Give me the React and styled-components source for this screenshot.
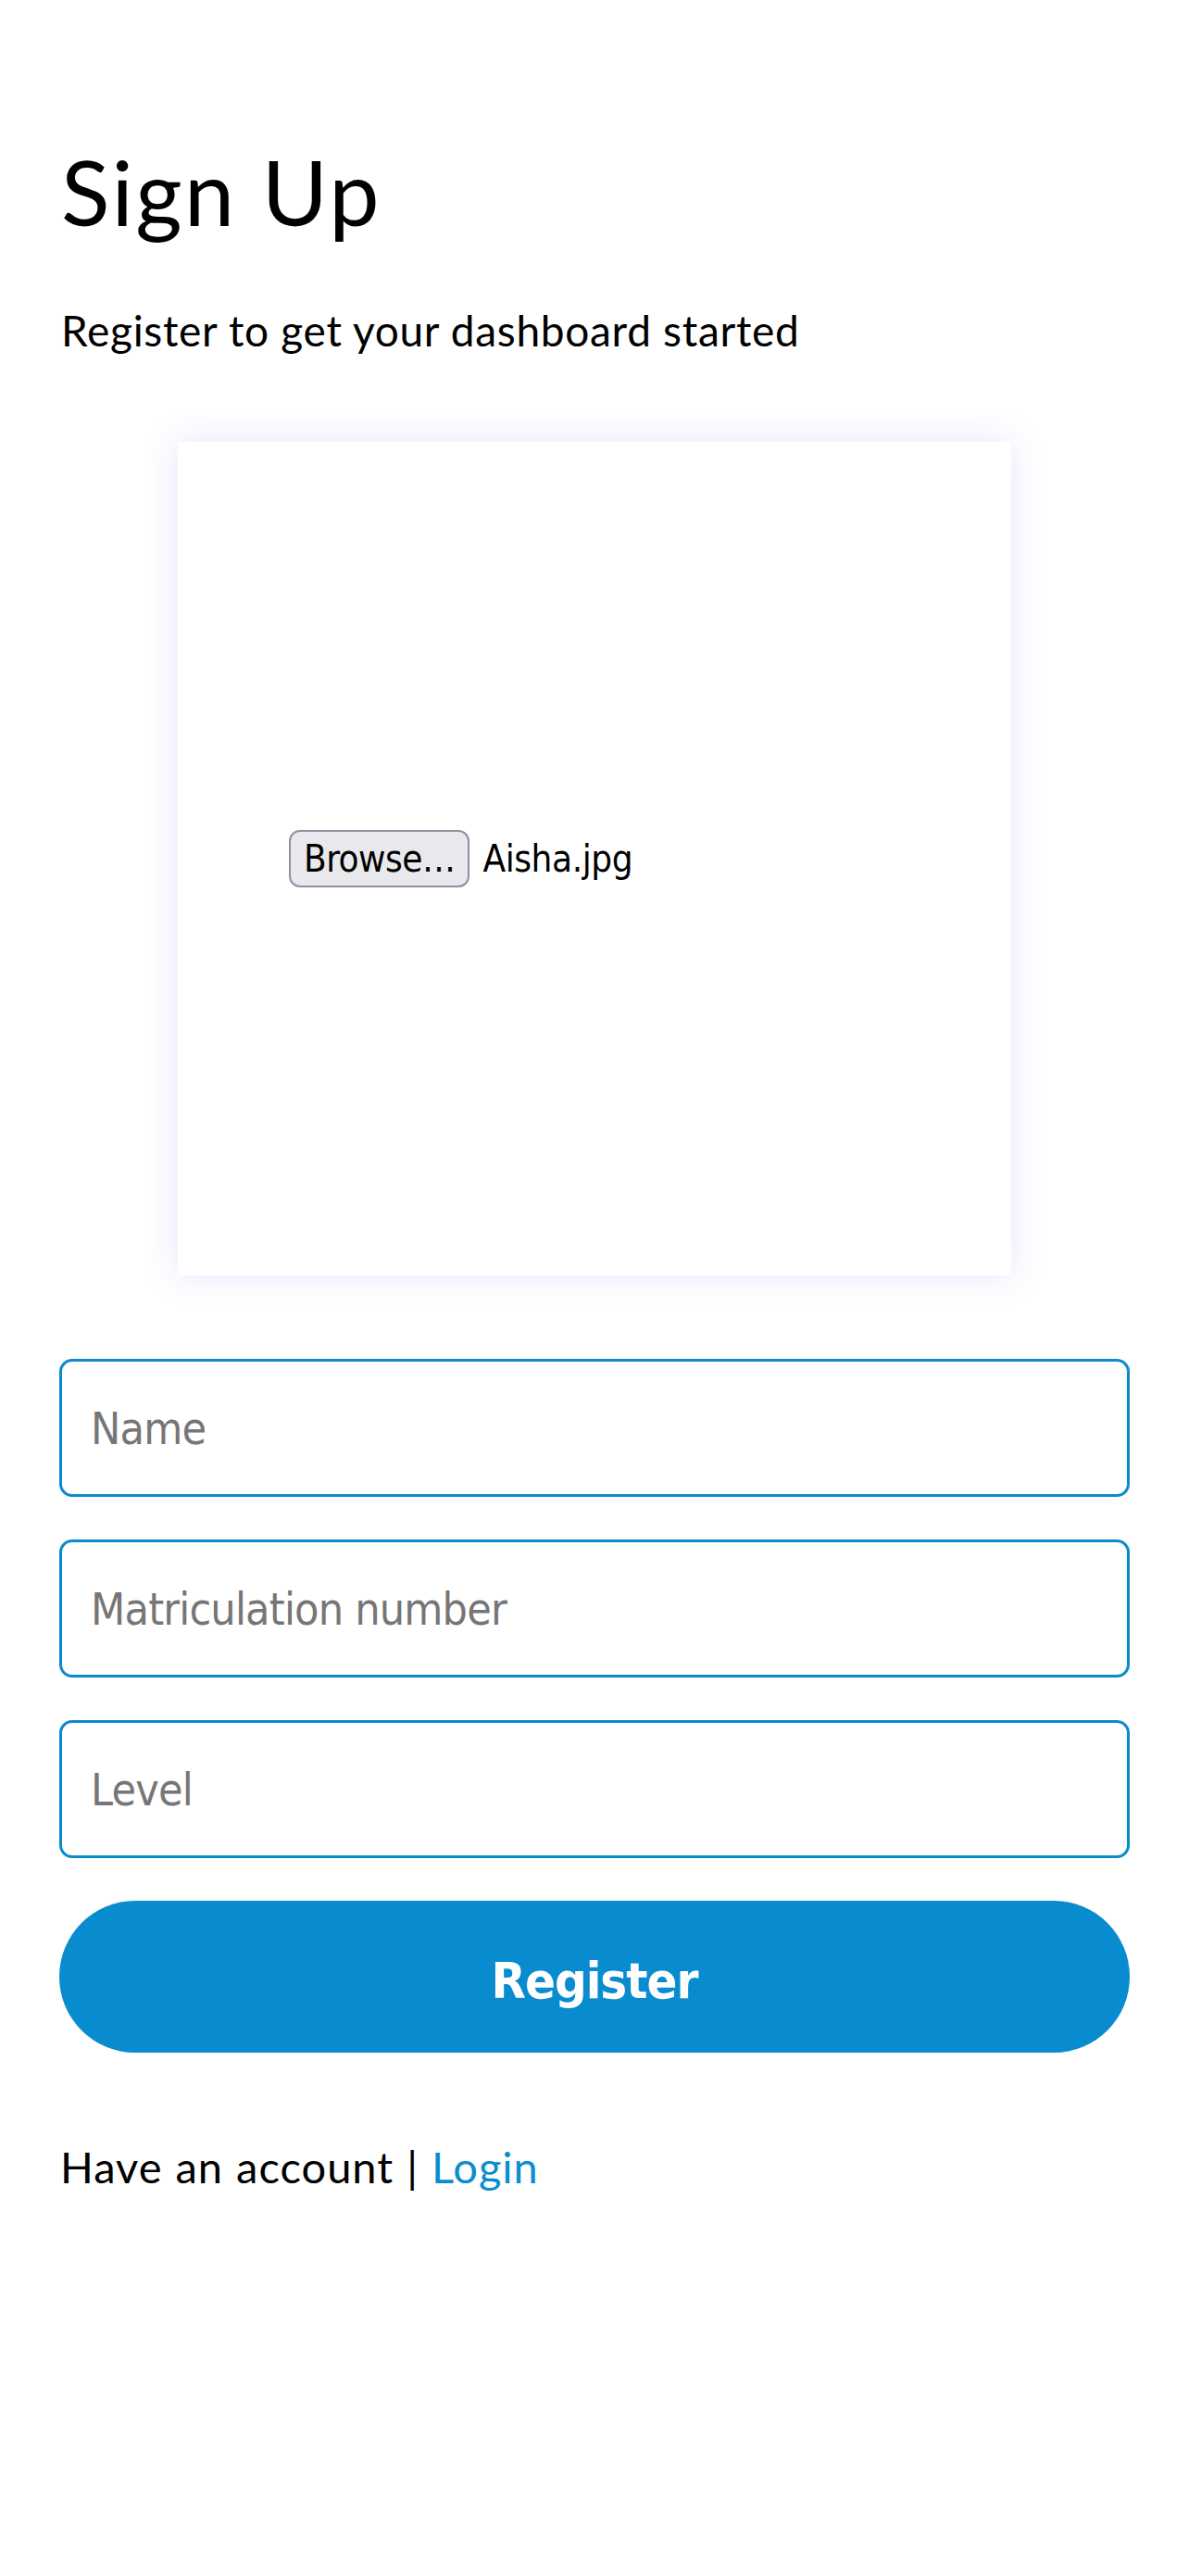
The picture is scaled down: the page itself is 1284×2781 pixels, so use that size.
import React from 'react';
import styled, { createGlobalStyle } from 'styled-components';

const GlobalStyle = createGlobalStyle`
  html, body {
    margin: 0;
    padding: 0;
    background: #ffffff;
  }
  body {
    font-family: Lato, "Liberation Sans", sans-serif;
    color: #000000;
  }
  *, *::before, *::after {
    box-sizing: border-box;
  }
`;

const Page = styled.main`
  width: 1284px;
  min-height: 2781px;
  padding: 149px 64px 0;
  display: flex;
  flex-direction: column;
`;

const Title = styled.h1`
  margin: 0;
  padding-left: 2px;
  font-family: Lato, "Liberation Sans", sans-serif;
  font-weight: 400;
  font-size: 97px;
  line-height: 116px;
  letter-spacing: 2.4px;
  color: #000;
`;

const Subtitle = styled.p`
  margin: 64px 0 0;
  padding-left: 2px;
  font-family: Lato, "Liberation Sans", sans-serif;
  font-weight: 400;
  font-size: 46px;
  line-height: 56px;
  letter-spacing: 0.7px;
  color: #000;
`;

const UploadCard = styled.div`
  align-self: center;
  margin-top: 92px;
  width: 900px;
  height: 900px;
  background: #ffffff;
  box-shadow: 0 0 34px rgba(100, 100, 255, 0.17);
  display: flex;
  align-items: center;
  justify-content: center;
`;

const FileField = styled.div`
  width: 660px;
  display: flex;
  align-items: center;
  gap: 14px;
  font-family: "DejaVu Sans Condensed", "DejaVu Sans", sans-serif;
  font-stretch: condensed;
  font-size: 40px;
  letter-spacing: -0.4px;
`;

const FileButton = styled.button`
  height: 62px;
  padding: 0 14px;
  border: 2px solid #8f8f9d;
  border-radius: 12px;
  background: #e9e9ed;
  color: #000;
  font: inherit;
  font-stretch: condensed;
  letter-spacing: -0.5px;
  line-height: 1;
`;

const FileName = styled.span`
  color: #000;
`;

const Form = styled.form`
  margin-top: 90px;
  display: flex;
  flex-direction: column;
  gap: 46px;
`;

const TextInput = styled.input`
  width: 100%;
  height: 149px;
  padding: 0 31px;
  border: 3px solid #0b8bcd;
  border-radius: 14px;
  background: #fff;
  font-family: "DejaVu Sans Condensed", "DejaVu Sans", sans-serif;
  font-stretch: condensed;
  font-size: 48px;
  letter-spacing: -0.8px;
  color: #000;
  outline: none;

  &::placeholder {
    color: #767676;
    opacity: 1;
  }
`;

const SubmitButton = styled.button`
  width: 100%;
  height: 164px;
  border: none;
  border-radius: 82px;
  background: #098ccf;
  color: #ffffff;
  font-family: "DejaVu Sans Condensed", "DejaVu Sans", sans-serif;
  font-stretch: condensed;
  font-weight: 700;
  font-size: 54px;
  letter-spacing: -1px;
  display: flex;
  align-items: center;
  justify-content: center;
  padding-top: 10px;
`;

const Footer = styled.p`
  margin: 95px 0 0;
  padding-left: 1px;
  font-family: Lato, "Liberation Sans", sans-serif;
  font-size: 47px;
  line-height: 56px;
  letter-spacing: 1px;
  word-spacing: 1px;
  color: #000;
`;

const LoginLink = styled.a`
  color: #0b8dcf;
  text-decoration: none;
`;

export default function App() {
  return (
    <>
      <GlobalStyle />
      <Page>
        <Title>Sign Up</Title>
        <Subtitle>Register to get your dashboard started</Subtitle>
        <UploadCard>
          <FileField>
            <FileButton type="button">Browse…</FileButton>
            <FileName>Aisha.jpg</FileName>
          </FileField>
        </UploadCard>
        <Form onSubmit={(e) => e.preventDefault()}>
          <TextInput type="text" placeholder="Name" />
          <TextInput type="text" placeholder="Matriculation number" />
          <TextInput type="text" placeholder="Level" />
          <SubmitButton type="submit">Register</SubmitButton>
        </Form>
        <Footer>
          Have an account | <LoginLink href="#">Login</LoginLink>
        </Footer>
      </Page>
    </>
  );
}
